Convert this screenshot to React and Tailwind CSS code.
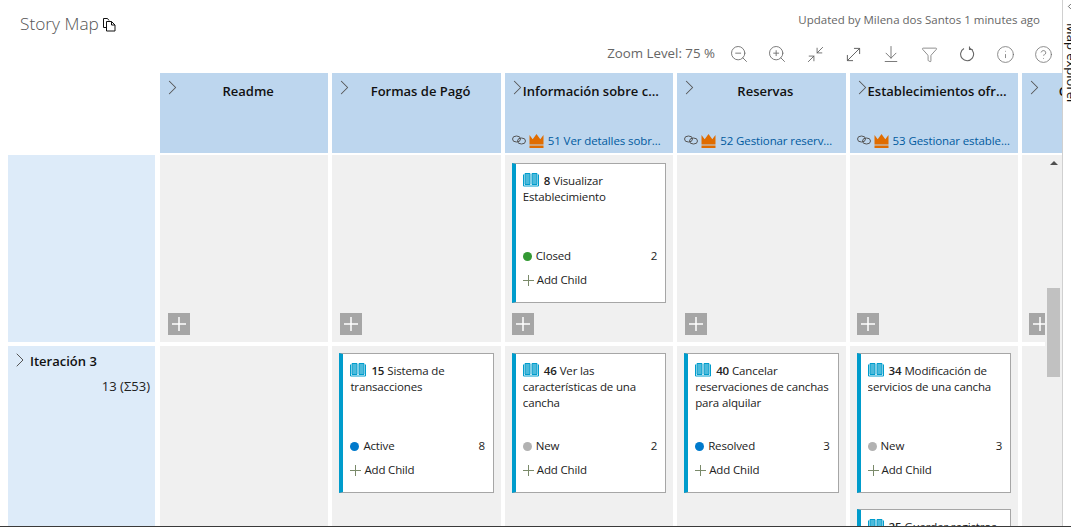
import { ZoomIn, ZoomOut, Minimize2, MoveDiagonal, ArrowDownToLine, Funnel, Info, CircleHelp, ChevronRight, ChevronLeft } from 'lucide-react'

const features = [
  { title: 'Readme' },
  { title: 'Formas de Pagó' },
  { title: 'Información sobre canchas', link: '51 Ver detalles sobre canchas' },
  { title: 'Reservas', link: '52 Gestionar reservaciones' },
  { title: 'Establecimientos ofrecidos', link: '53 Gestionar establecimientos' },
  { title: 'Comunicaciones' },
]

const rowOne = [[], [], [{ id: 8, title: 'Visualizar Establecimiento', state: 'Closed', dot: 'bg-[#339933]', count: 2 }], [], [], []]

const rowTwo = [
  [],
  [{ id: 15, title: 'Sistema de transacciones', state: 'Active', dot: 'bg-[#007acc]', count: 8 }],
  [{ id: 46, title: 'Ver las características de una cancha', state: 'New', dot: 'bg-[#b2b2b2]', count: 2 }],
  [{ id: 40, title: 'Cancelar reservaciones de canchas para alquilar', state: 'Resolved', dot: 'bg-[#007acc]', count: 3 }],
  [
    { id: 34, title: 'Modificación de servicios de una cancha', state: 'New', dot: 'bg-[#b2b2b2]', count: 3 },
    { id: 25, title: 'Guardar registros de cancha', state: 'New', dot: 'bg-[#b2b2b2]', count: 1 },
  ],
  [],
]

function BookIcon() {
  return (
    <svg width="16" height="14" viewBox="0 0 16 14" className="inline-block align-[-2px] mr-[5px]">
      <path d="M0.5 1.5v11.500h15v-11.500" fill="none" stroke="#009ccc" />
      <path d="M2 0.5h5v11H2zM9 0.5h5v11H9z" fill="#009ccc" fillOpacity="0.7" stroke="#009ccc" />
    </svg>
  )
}

function Crown() {
  return (
    <svg width="15" height="14" viewBox="0 0 15 14" className="shrink-0">
      <path d="M0.5 1l3.2 4.2L7.5 0l3.800 5.200L14.500 1v9.500h-14zM0.500 11.500h14V14h-14z" fill="#e06c00" />
    </svg>
  )
}

function LinkIcon() {
  return (
    <svg width="14" height="10" viewBox="0 0 14 10" className="shrink-0 mb-[3px]" fill="none" stroke="#555" strokeWidth="1">
      <ellipse cx="4.500" cy="4" rx="4" ry="3" />
      <ellipse cx="9.500" cy="6" rx="4" ry="3" />
    </svg>
  )
}

function CopyIcon() {
  return (
    <svg width="15" height="15" viewBox="0 0 15 15" className="ml-[3px] mt-[5px]" fill="none" stroke="#111" strokeWidth="1">
      <path d="M5.500 10.500H1.500v-9h4l1.500 2" />
      <path d="M4.500 4.500h5l3.500 3.500v6H4.500zM9.500 4.500V8h3.500" fill="#fff" />
    </svg>
  )
}

function RefreshIcon() {
  return (
    <svg width="15" height="16" viewBox="0 0 15 16" fill="none" stroke="#666" strokeWidth="1.100">
      <path d="M9.800 2.300A6.500 6.500 0 1 1 4 2.500" />
      <path d="M9.500 0.500v3h3" />
    </svg>
  )
}

function Card({ card }) {
  return (
    <div className="h-[140px] w-[154.500px] shrink-0 bg-white border border-[#a6a6a6] border-l-4 border-l-[#009ccc] pl-[7px] pr-2 pt-[9px] flex flex-col text-[11.500px] tracking-[-0.150px] leading-[16px] text-[#222]">
      <div className="h-[74px] overflow-hidden">
        <BookIcon />
        <span className="font-semibold mr-[3px]">{card.id}</span>
        {card.title}
      </div>
      <div className="flex items-center h-[16px] mt-[1px]">
        <span className={`w-[9px] h-[9px] rounded-full mr-[4px] ${card.dot}`} />
        <span>{card.state}</span>
        <span className="ml-auto">{card.count}</span>
      </div>
      <div className="flex items-center h-[16px] mt-2">
        <svg width="11" height="11" viewBox="0 0 11 11" className="mr-[3px]" stroke="#7a8a6a">
          <path d="M5.500 0v11M0 5.500h11" />
        </svg>
        <span>Add Child</span>
      </div>
    </div>
  )
}

function FeatureHeader({ feature }) {
  return (
    <div className="relative h-[80px] bg-[#bdd6ee] min-w-0">
      <ChevronRight size={25} strokeWidth={1} color="#555" className="absolute left-0 top-[2px]" />
      <div className="pl-[18px] pr-[10px] pt-[9px] text-center text-[13px] leading-[18px] font-semibold text-[#111] truncate">
        {feature.title}
      </div>
      {feature.link && (
        <div className="absolute left-[7px] right-[8px] top-[60px] flex items-center gap-[3px] text-[11.500px] tracking-[-0.100px] leading-[16px] text-[#005a9e]">
          <LinkIcon />
          <Crown />
          <span className="truncate ml-px">{feature.link}</span>
        </div>
      )}
    </div>
  )
}

function AddButton() {
  return (
    <div className="w-[22px] h-[22px] bg-[#a6a6a6] flex items-center justify-center shrink-0">
      <svg width="14" height="14" viewBox="0 0 14 14" stroke="#fff" strokeWidth="1.500">
        <path d="M7 0v14M0 7h14" />
      </svg>
    </div>
  )
}

export default function App() {
  const tools = [
    <ZoomOut key="out" size={20} strokeWidth={1.100} color="#707070" />,
    <ZoomIn key="in" size={20} strokeWidth={1.100} color="#707070" />,
    <Minimize2 key="min" size={19} strokeWidth={1.100} color="#606060" />,
    <MoveDiagonal key="max" size={21} strokeWidth={1.100} color="#606060" />,
    <ArrowDownToLine key="down" size={20} strokeWidth={1.100} color="#707070" />,
    <Funnel key="filter" size={17} strokeWidth={1.100} color="#707070" />,
    <RefreshIcon key="refresh" />,
    <Info key="info" size={19} strokeWidth={1} color="#707070" />,
    <CircleHelp key="help" size={19} strokeWidth={1} color="#707070" />,
  ]

  return (
    <div className="w-[1071px] h-[527px] flex flex-col overflow-hidden bg-white" style={{ fontFamily: '"Open Sans", sans-serif' }}>
      <div className="flex flex-1 min-h-0">
        <main className="relative w-[1062px] shrink-0 overflow-hidden">
          {/* Header */}
          <div className="flex justify-between h-[41px] pl-5 pr-[22px]">
            <div className="flex items-start pt-[12px]">
              <span className="text-[17.300px] leading-[24px] font-light text-[#555]">Story Map</span>
              <CopyIcon />
            </div>
            <div className="pt-[12px] text-[11.500px] leading-[16px] text-[#666]">Updated by Milena dos Santos 1 minutes ago</div>
          </div>

          {/* Toolbar */}
          <div className="flex items-center justify-end h-[26px] text-[#666]">
            <span className="text-[13.300px] mr-[5px]">Zoom Level: 75 %</span>
            {tools.map((t, i) => (
              <div key={i} className="w-[38px] flex justify-center">{t}</div>
            ))}
          </div>

          {/* Board */}
          <div className="pl-2 pt-[6px] w-[1200px]">
            <div className="grid grid-cols-[148px_repeat(6,168.400px)] gap-x-[4px]">
              <div />
              {features.map(f => <FeatureHeader key={f.title} feature={f} />)}
            </div>

            <div className="grid grid-cols-[148px_repeat(6,168.400px)] gap-x-[4px] mt-[2px] h-[187px]">
              <div className="bg-[#ddebf9] mr-px" />
              {rowOne.map((cards, i) => (
                <div key={i} className="bg-[#f0f0f0] flex flex-col pt-2 pb-[7px] pl-[7px]">
                  {cards.map(c => <Card key={c.id} card={c} />)}
                  <div className="mt-auto pl-[0.500px]"><AddButton /></div>
                </div>
              ))}
            </div>

            <div className="grid grid-cols-[148px_repeat(6,168.400px)] gap-x-[4px] mt-1 h-[240px]">
              <div className="bg-[#ddebf9] mr-px pr-[5px] pt-[6px] text-[13px] leading-[18px] text-[#222]">
                <div className="flex items-center h-[18px]">
                  <ChevronRight size={24} strokeWidth={1} color="#555" className="shrink-0 -mt-[3px]" />
                  <span className="-ml-[2px] font-semibold text-[#111]">Iteración 3</span>
                </div>
                <div className="text-right mt-[7px]">13 (Σ53)</div>
              </div>
              {rowTwo.map((cards, i) => (
                <div key={i} className="bg-[#f0f0f0] flex flex-col gap-4 pt-[7px] pl-[7px]">
                  {cards.map(c => <Card key={c.id} card={c} />)}
                </div>
              ))}
            </div>
          </div>

          {/* Scrollbar */}
          <div className="absolute right-0 top-[155px] bottom-0 w-[17px] bg-[#f0f0f0]">
            <div className="absolute left-[5px] top-[6px] w-0 h-0 border-x-[4px] border-x-transparent border-b-[4px] border-b-[#505050]" />
            <div className="absolute left-[2px] top-[133px] w-[13px] h-[89px] bg-[#c1c1c1]" />
          </div>
        </main>

        {/* Side rail */}
        <div className="relative flex-1 border-l border-[#d0d0d0] overflow-hidden">
          <ChevronLeft size={9} strokeWidth={2} color="#444" className="absolute left-[2px] top-[2px]" />
          <div className="absolute left-[1px] top-[23px] text-[13px] leading-[16px] text-[#111] whitespace-nowrap [writing-mode:vertical-rl]">Map explorer</div>
        </div>
      </div>
      <div className="h-px bg-[#3a3a3a] shrink-0" />
    </div>
  )
}
